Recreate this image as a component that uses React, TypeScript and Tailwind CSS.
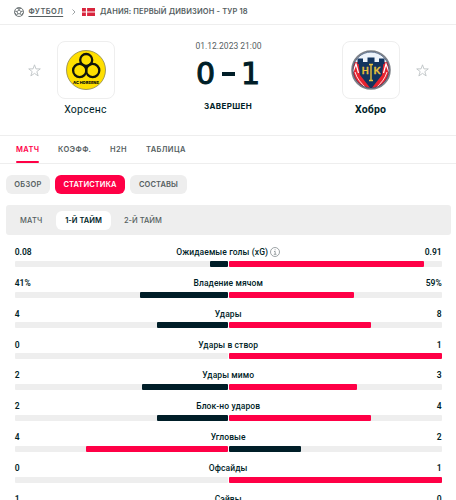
import clsx from "clsx";

interface Stat {
  label: string;
  home: string;
  away: string;
  homePct: number;
  awayPct: number;
  hasInfo?: boolean;
}

const stats: Stat[] = [
  { label: "Ожидаемые голы (xG)", home: "0.08", away: "0.91", homePct: 8.1, awayPct: 91.9, hasInfo: true },
  { label: "Владение мячом", home: "41%", away: "59%", homePct: 41, awayPct: 59 },
  { label: "Удары", home: "4", away: "8", homePct: 33.3, awayPct: 66.7 },
  { label: "Удары в створ", home: "0", away: "1", homePct: 0, awayPct: 100 },
  { label: "Удары мимо", home: "2", away: "3", homePct: 40, awayPct: 60 },
  { label: "Блок-но ударов", home: "2", away: "4", homePct: 33.3, awayPct: 66.7 },
  { label: "Угловые", home: "4", away: "2", homePct: 66.4, awayPct: 33.8 },
  { label: "Офсайды", home: "0", away: "1", homePct: 0, awayPct: 100 },
  { label: "Сэйвы", home: "1", away: "0", homePct: 100, awayPct: 0 },
];

function FootballIcon() {
  return (
    <svg viewBox="0 0 20 20" className="h-[10px] w-[10px]" fill="none" stroke="#555e61" strokeWidth="1.6">
      <circle cx="10" cy="10" r="9" />
      <path d="M10 6l4 3-1.5 4.5h-5L6 9zM10 6V3M14 9l4-1M12.5 13.5l2.5 3M7.5 13.5L5 16.5M6 9L2 8M6 2.5L10 4l4-1.5M1.5 12L4 14v3M18.5 12L16 14v3" />
    </svg>
  );
}

function StarIcon() {
  return (
    <svg viewBox="0 0 24 24" className="h-[13px] w-[13px]" fill="none" stroke="#bfc4c6" strokeWidth="1.7">
      <path d="M12 1.500l2.700 7.500h8l-6.400 5 2.400 8L12 17.300 5.300 22l2.400-8-6.400-5h8z" />
    </svg>
  );
}

function InfoIcon() {
  return (
    <svg viewBox="0 0 10 10" className="h-[10px] w-[10px]" fill="none" stroke="#858d90" strokeWidth="0.8">
      <circle cx="5" cy="5" r="4.500" />
      <path d="M4 4.500h1.200v2.700M3.800 7.300h2.700M4.600 2.800h1" />
    </svg>
  );
}

function HorsensLogo() {
  return (
    <svg viewBox="0 0 40 40" className="h-10 w-10">
      <circle cx="20" cy="20" r="19.500" fill="#ffdf00" stroke="#8b8552" strokeWidth="0.8" />
      <g fill="none" stroke="#11140c" strokeWidth="2.300">
        <circle cx="20.200" cy="10" r="6" />
        <circle cx="13.700" cy="20.500" r="6.600" />
        <circle cx="26.700" cy="20.500" r="6.600" />
      </g>
      <text x="20" y="33.500" textAnchor="middle" textLength="26" lengthAdjust="spacingAndGlyphs" fontSize="4" fontWeight="900" fontFamily="Inter, sans-serif" fill="#11140c">
        AC HORSENS
      </text>
    </svg>
  );
}

function HobroLogo() {
  return (
    <svg viewBox="0 0 40 40" className="h-10 w-10">
      <defs>
        <clipPath id="crest">
          <circle cx="20" cy="20" r="18" />
        </clipPath>
      </defs>
      <circle cx="20" cy="20" r="19" fill="#fff" stroke="#7d8187" strokeWidth="1.600" />
      <g clipPath="url(#crest)">
        <path d="M0 12h40v28H0z" fill="#e8232f" />
        <path d="M0 22c3 8 8 13 15 18M4 22c2 7 6 11 11 16M40 22c-3 8-8 13-15 18M36 22c-2 7-6 11-11 16" fill="none" stroke="#fff" strokeWidth="0.900" />
        <path d="M2 22l3-8 2.500 9M38 22l-3-8-2.500 9" fill="none" stroke="#fff" strokeWidth="1.200" />
        <path d="M0 0h40v12H0z" fill="#edf3fa" />
        <path d="M6.500 8.500H12V12h4.500V7.500h7V12H28V8.500h5.500V14h-1.200l-1.300 11-11 14L9 25 7.700 14H6.500z" fill="#12345e" />
      </g>
      <circle cx="20" cy="20" r="18" fill="none" stroke="#18345a" strokeWidth="0.700" />
      <g fill="#ebc23c" stroke="#ebc23c" strokeWidth="0.300" fontFamily="Lato, sans-serif" fontWeight="700">
        <text x="10.700" y="24" fontSize="10" textLength="7" lengthAdjust="spacingAndGlyphs">H</text>
        <text x="22.500" y="24" fontSize="10">K</text>
      </g>
      <path d="M18 14.500h4M20 14.500v16M18 30.500h4" stroke="#ebc23c" strokeWidth="1.400" />
    </svg>
  );
}

function Breadcrumbs() {
  return (
    <div className="flex h-[25px] items-center border-b border-[#eee] pl-[13.5px] text-[7.5px] font-semibold text-[#555e61]">
      <FootballIcon />
      <span className="ml-[5px] w-[35px] whitespace-nowrap tracking-[0.4px] underline underline-offset-2">ФУТБОЛ</span>
      <svg viewBox="0 0 4 6" className="ml-2 h-[6px] w-1" fill="none" stroke="#9da3a5">
        <path d="M.5.500L3 3 .5 5.500" />
      </svg>
      <svg viewBox="0 0 13 8" className="ml-[6.5px] h-[8px] w-[13px]">
        <path d="M0 0h13v8H0z" fill="#d8253d" />
        <path d="M4.500 0v8M0 4h13" stroke="#fff" strokeWidth="1.200" />
      </svg>
      <span className="ml-[5px] whitespace-nowrap tracking-[0.15px]">ДАНИЯ: ПЕРВЫЙ ДИВИЗИОН - ТУР 18</span>
    </div>
  );
}

function MatchHeader() {
  return (
    <div className="flex h-[111px] justify-between border-b border-[#eee] px-[27.5px] pt-4">
      <div className="flex">
        <div className="pt-[23px]">
          <StarIcon />
        </div>
        <div className="ml-4 flex w-[58px] flex-col items-center">
          <div className="flex h-[58px] w-[58px] items-center justify-center rounded-lg border border-[#eee]">
            <HorsensLogo />
          </div>
          <span className="mt-[3px] font-[Roboto] text-[10.5px] leading-4 tracking-[0.25px] whitespace-nowrap">Хорсенс</span>
        </div>
      </div>
      <div className="flex w-[80px] flex-col items-center">
        <span className="-mt-px ml-[1px] font-[Roboto] text-[8.5px] leading-3 whitespace-nowrap text-[#555e61]">01.12.2023 21:00</span>
        <div className="mt-[4px] flex h-[36px] w-[62px] items-center justify-between font-['DejaVu_Sans'] text-[30px] leading-[36px] [-webkit-text-stroke:1.1px_#001e28]">
          <span className="-ml-px">0</span>
          <span className="h-[4px] w-[13px] bg-[#001e28]" />
          <span className="-mr-px">1</span>
        </div>
        <span className="mt-[8px] text-[8px] leading-3 font-bold tracking-[0.35px]">ЗАВЕРШЕН</span>
      </div>
      <div className="flex">
        <div className="mr-4 flex w-[58px] flex-col items-center">
          <div className="flex h-[58px] w-[58px] items-center justify-center rounded-lg border border-[#eee]">
            <HobroLogo />
          </div>
          <span className="mt-[3px] font-[Roboto] text-[10.5px] leading-4 font-bold tracking-[0.2px] whitespace-nowrap">Хобро</span>
        </div>
        <div className="pt-[23px]">
          <StarIcon />
        </div>
      </div>
    </div>
  );
}

function MainTabs() {
  return (
    <div className="flex h-7 border-b border-[#eee] pl-4 text-[7.5px] leading-[28px] font-semibold tracking-[0.4px] text-[#555e61]">
      <span className="relative w-[42px] text-[#ff0046]">
        МАТЧ
        <span className="absolute bottom-0 left-0 h-[2px] w-[23px] rounded-full bg-[#ff0046]" />
      </span>
      <span className="w-[52px]">КОЭФФ.</span>
      <span className="w-9">H2H</span>
      <span>ТАБЛИЦА</span>
    </div>
  );
}

function StatRow({ stat }: { stat: Stat }) {
  const homeWins = stat.homePct > stat.awayPct;
  return (
    <div className="h-[30.86px]">
      <div className="flex h-[14px] items-center justify-between font-[Roboto] text-[8.5px] leading-[14px] font-semibold">
        <span className="w-10">{stat.home}</span>
        <span className="flex items-center gap-[2px] font-medium tracking-[0.1px] whitespace-nowrap">
          {stat.label}
          {stat.hasInfo && <InfoIcon />}
        </span>
        <span className="w-10 text-right">{stat.away}</span>
      </div>
      <div className="mt-[1.7px] flex h-[6px] gap-[1.3px]">
        <div className="flex flex-1 justify-end rounded-[1px] bg-[#eee]">
          <div
            className={clsx("rounded-[1px]", homeWins ? "bg-[#ff0046]" : "bg-[#001e28]")}
            style={{ width: `${stat.homePct}%` }}
          />
        </div>
        <div className="flex flex-1 rounded-[1px] bg-[#eee]">
          <div
            className={clsx("rounded-[1px]", homeWins ? "bg-[#001e28]" : "bg-[#ff0046]")}
            style={{ width: `${stat.awayPct}%` }}
          />
        </div>
      </div>
    </div>
  );
}

export default function App() {
  return (
    <div className="h-[500px] w-[456px] overflow-hidden bg-white font-['Inter','Liberation_Sans',sans-serif] text-[#001e28]">
      <Breadcrumbs />
      <MatchHeader />
      <MainTabs />
      <div className="mt-[11px] flex gap-[5px] pl-[6px] text-[7.5px] leading-[19px] font-semibold tracking-[0.3px] text-[#555e61]">
        <span className="w-[44px] rounded-md bg-[#eee] text-center">ОБЗОР</span>
        <span className="w-[70px] rounded-md bg-[#ff0046] text-center tracking-[0.1px] text-white">СТАТИСТИКА</span>
        <span className="w-[57px] rounded-md bg-[#eee] text-center tracking-[0.1px]">СОСТАВЫ</span>
      </div>
      <div className="mx-[6px] mt-[11px] flex h-[30px] w-[445px] items-center rounded-[3px] bg-[#eee] pl-[14px] text-[7.5px] leading-[19px] font-medium text-[#555e61]">
        <span className="w-9 tracking-[0.2px]">МАТЧ</span>
        <span className="w-[55px] rounded-md bg-white text-center font-semibold text-[#001e28]">1-Й ТАЙМ</span>
        <span className="ml-[13px]">2-Й ТАЙМ</span>
      </div>
      <div className="mt-[10px] ml-[14.7px] w-[427px]">
        {stats.map((stat) => (
          <StatRow key={stat.label} stat={stat} />
        ))}
      </div>
    </div>
  );
}
